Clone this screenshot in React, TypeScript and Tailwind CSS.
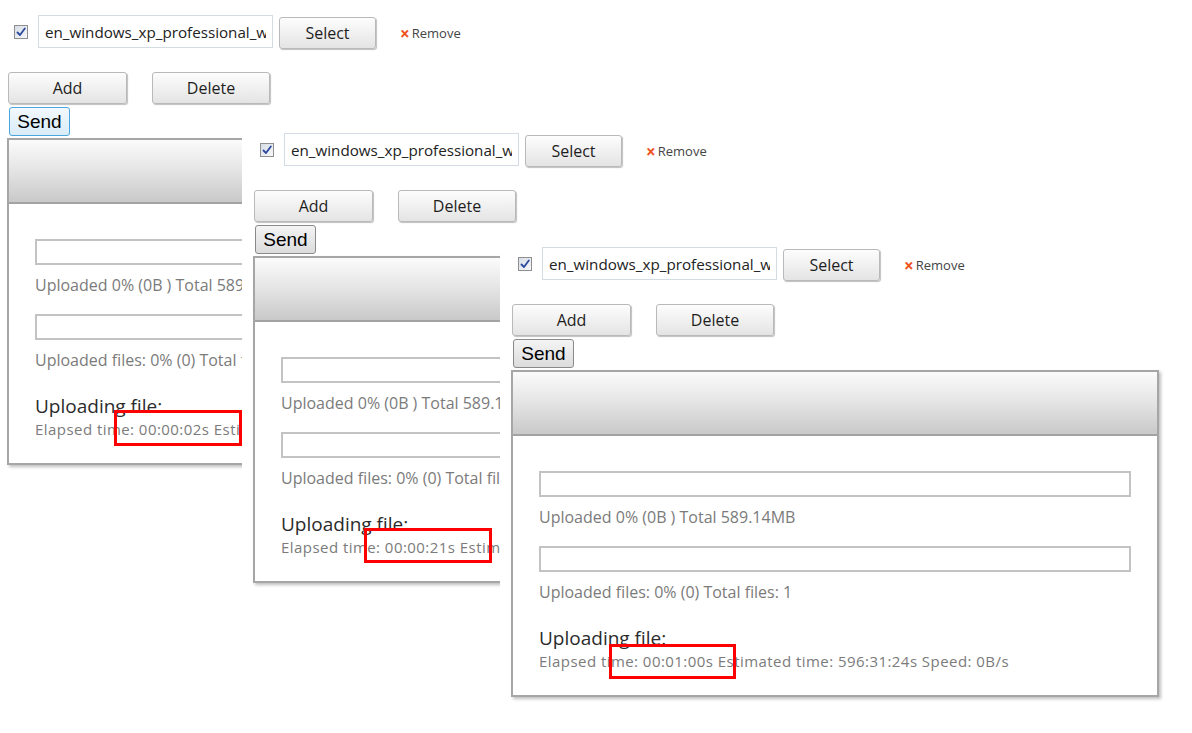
import React from "react";

const FILE_NAME =
  "en_windows_xp_professional_with_service_pack_3_x86_cd_x14-80428.iso";

type UploadStats = {
  elapsed: string;
  estimated: string;
  speed: string;
};

const CheckMark: React.FC = () => (
  <span className="flex h-[14px] w-[14px] items-center justify-center border border-[#8f8f8f] bg-gradient-to-br from-[#d8dde6] to-[#f6f7f9]">
    <svg width="10" height="10" viewBox="0 0 10 10">
      <path
        d="M1.5 5.5 L4 8 L8.8 1.5"
        fill="none"
        stroke="#2c4a9e"
        strokeWidth="1.8"
        strokeLinecap="round"
        strokeLinejoin="round"
      />
    </svg>
  </span>
);

const GrayButton: React.FC<{ className?: string; children: React.ReactNode }> = ({
  className = "",
  children,
}) => (
  <button
    className={
      "flex items-center justify-center rounded-[3px] border border-[#b9b9b9] bg-gradient-to-b from-[#fdfdfd] to-[#e4e4e4] text-[16px] text-[#1e1e1e] shadow-[1px_1px_1px_rgba(0,0,0,0.25)] " +
      className
    }
  >
    {children}
  </button>
);

const UploadPanel: React.FC<{ stats: UploadStats; focused?: boolean }> = ({
  stats,
  focused = false,
}) => {
  return (
    <div className="flex flex-col font-['Open_Sans',sans-serif]">
      {/* file row */}
      <div className="flex h-[33px] items-center">
        <span className="ml-[6px] mr-[10px]">
          <CheckMark />
        </span>
        <input
          readOnly
          value={FILE_NAME}
          className="h-[33px] w-[235px] border border-[#d3dbe5] bg-white px-[6px] text-[15.2px] text-[#222] outline-none"
        />
        <GrayButton className="ml-[6px] mt-[3px] h-[32px] w-[97px]">Select</GrayButton>
        <span className="ml-[24px] mt-[4px] flex items-center text-[13px] font-medium text-[#444]">
          <span className="mr-[2px] text-[17px] font-bold leading-none text-[#f0541e]">×</span>
          Remove
        </span>
      </div>

      {/* add / delete */}
      <div className="mt-[24px] flex">
        <GrayButton className="h-[32px] w-[119px]">Add</GrayButton>
        <GrayButton className="ml-[25px] h-[32px] w-[118px]">Delete</GrayButton>
      </div>
      <button
        className={
          "ml-[1px] mt-[3px] h-[29px] w-[61px] rounded-[3px] border font-['Liberation_Sans',sans-serif] text-[19px] leading-none text-black " +
          (focused
            ? "border-[#4aa6dc] bg-gradient-to-b from-[#f3f9fd] to-[#d9ebf7]"
            : "border-[#8a8a8a] bg-gradient-to-b from-[#f4f4f4] to-[#dcdcdc]")
        }
      >
        Send
      </button>

      {/* progress box */}
      <div className="-ml-[1px] mt-[2px] h-[327px] w-[648px] border-2 border-[#a6a6a6] bg-white shadow-[2px_2px_3px_rgba(0,0,0,0.25)]">
        <div className="h-[64px] border-b-2 border-[#a3a3a3] bg-gradient-to-b from-[#fbfbfb] via-[#e4e4e4] to-[#c9c9c9]" />
        <div className="flex flex-col px-[26px]">
          <div className="mt-[35px] h-[26px] w-full border-2 border-[#c3c3c3] bg-white" />
          <p className="mt-[10px] h-[20px] whitespace-nowrap text-[16px] leading-[20px] text-[#7b7b7b]">
            Uploaded 0% (0B ) Total 589.14MB
          </p>
          <div className="mt-[19px] h-[26px] w-full border-2 border-[#c3c3c3] bg-white" />
          <p className="mt-[10px] h-[20px] whitespace-nowrap text-[16px] leading-[20px] text-[#7b7b7b]">
            Uploaded files: 0% (0) Total files: 1
          </p>
          <p className="mt-[24px] h-[24px] whitespace-nowrap text-[19px] leading-[24px] text-[#2b2b2b]">
            Uploading file:
          </p>
          <p className="mt-[2px] h-[18px] whitespace-nowrap text-[15px] leading-[18px] tracking-[0.45px] text-[#7b7b7b]">
            Elapsed time: {stats.elapsed} Estimated time: {stats.estimated} Speed:{" "}
            {stats.speed}
          </p>
        </div>
      </div>
    </div>
  );
};

export default function App() {
  return (
    <div className="relative h-[733px] w-[1192px] overflow-hidden bg-white">
      {/* three snapshots of the uploader, taken at different moments */}
      <div className="absolute left-0 top-0 h-[480px] w-[690px] bg-white pl-[8px] pt-[15px]">
        <UploadPanel
          focused
          stats={{ elapsed: "00:00:02s", estimated: "327:18:02s", speed: "0B/s" }}
        />
      </div>
      <div className="absolute left-[242px] top-[120px] h-[480px] w-[690px] bg-white pl-[12px] pt-[13px]">
        <UploadPanel
          stats={{ elapsed: "00:00:21s", estimated: "441:05:47s", speed: "0B/s" }}
        />
      </div>
      <div className="absolute left-[500px] top-[235px] h-[498px] w-[692px] bg-white pl-[12px] pt-[12px]">
        <UploadPanel
          stats={{ elapsed: "00:01:00s", estimated: "596:31:24s", speed: "0B/s" }}
        />
      </div>

      {/* highlight boxes around the elapsed timer */}
      <div className="absolute left-[114px] top-[410px] h-[36px] w-[128px] border-[3px] border-[#ff0000]" />
      <div className="absolute left-[364px] top-[528px] h-[35px] w-[128px] border-[3px] border-[#ff0000]" />
      <div className="absolute left-[609px] top-[644px] h-[35px] w-[127px] border-[3px] border-[#ff0000]" />
    </div>
  );
}
